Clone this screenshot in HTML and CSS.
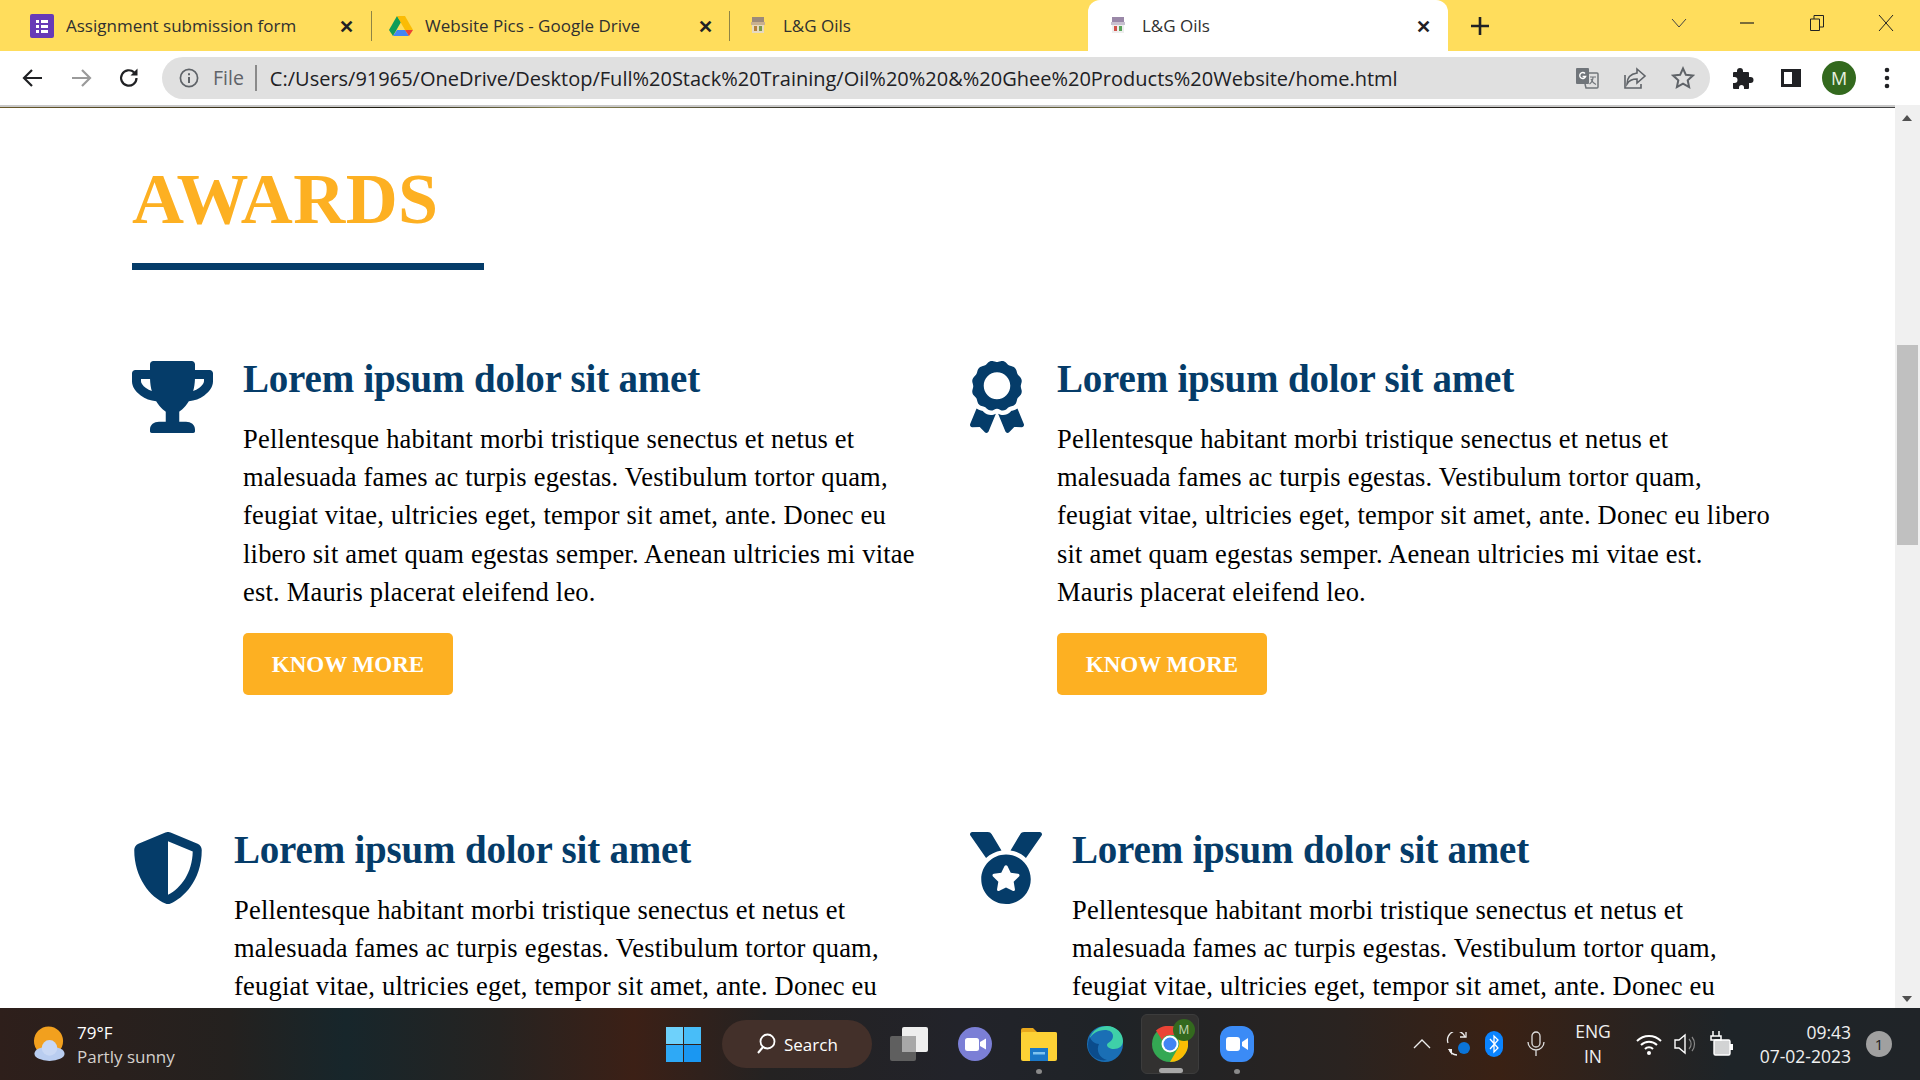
FILE: index.html
```html
<!DOCTYPE html>
<html lang="en">
<head>
    <meta charset="UTF-8">
    <title>L&amp;G Oils</title>
    <link rel="stylesheet" href="styles.css">
</head>
<body>

<div class="tabstrip">
    <div class="tab tab-first">
        <svg class="favicon" viewBox="0 0 24 24"><rect x="0" y="0" width="24" height="24" rx="2" fill="#673ab7"/><path d="M6 6h3v3H6zM11 6h7v3h-7zM6 11h3v3H6zM11 11h7v3h-7zM6 16h3v3H6zM11 16h7v3h-7z" fill="#fff"/></svg>
        <span class="tab-title">Assignment submission form</span>
        <span class="tab-close">&#10005;</span>
    </div>
    <div class="tab">
        <svg class="favicon" viewBox="0 0 24 24"><path d="M8 2L0 16l4 6 8-14z" fill="#0f9d58"/><path d="M8 2h8l8 14h-8z" fill="#fbbc04"/><path d="M4 22l4-6h8l4 6z" fill="#4285f4"/><path d="M16 16h8l-4 6z" fill="#ea4335"/></svg>
        <span class="tab-title">Website Pics - Google Drive</span>
        <span class="tab-close">&#10005;</span>
    </div>
    <div class="tab tab-shop">
        <svg class="favicon-small" viewBox="0 0 16 20"><rect x="2" y="1" width="12" height="5" fill="#9c8a7a"/><rect x="1" y="6" width="14" height="3" fill="#c9b08e"/><rect x="2" y="9" width="12" height="8" fill="#e6d9c0"/><rect x="4" y="10" width="3" height="5" fill="#b5803c"/><rect x="9" y="10" width="3" height="5" fill="#7a9a4a"/></svg>
        <span class="tab-title">L&amp;G Oils</span>
    </div>
    <div class="tab tab-active">
        <svg class="favicon-small" viewBox="0 0 16 20"><rect x="2" y="1" width="12" height="5" fill="#9a88a8"/><rect x="1" y="6" width="14" height="3" fill="#c8c0d0"/><rect x="2" y="9" width="12" height="8" fill="#eee"/><rect x="4" y="10" width="3" height="5" fill="#d0524a"/><rect x="9" y="10" width="3" height="5" fill="#5aa35a"/></svg>
        <span class="tab-title">L&amp;G Oils</span>
        <span class="tab-close">&#10005;</span>
    </div>
    <svg class="new-tab" viewBox="0 0 18 18"><path d="M9 0v18M0 9h18" stroke="#202124" stroke-width="2.6" fill="none"/></svg>
    <div class="win-controls">
        <svg viewBox="0 0 16 10" class="win-chevron"><path d="M1 1l7 8 7-8" stroke="#444" fill="none"/></svg>
        <svg viewBox="0 0 16 16" class="win-min"><path d="M1 8h14" stroke="#222" stroke-width="1.2"/></svg>
        <svg viewBox="0 0 16 18" class="win-restore"><path d="M1.5 5h9v11.5h-9zM5 5V1.5h9.5V13h-4" stroke="#222" fill="none"/></svg>
        <svg viewBox="0 0 16 18" class="win-close"><path d="M1 1l14 16M15 1L1 17" stroke="#222" fill="none"/></svg>
    </div>
</div>

<div class="toolbar">
    <svg class="nav-btn" viewBox="0 0 24 24"><path d="M21 12H4M11 4l-8 8 8 8" stroke="#202124" stroke-width="2.2" fill="none"/></svg>
    <svg class="nav-btn" viewBox="0 0 24 24"><path d="M3 12h17M13 4l8 8-8 8" stroke="#9a9a9a" stroke-width="2.2" fill="none"/></svg>
    <svg class="nav-btn" viewBox="0 0 24 24"><path d="M19.5 12a7.7 7.7 0 1 1-2.4-5.6" stroke="#202124" stroke-width="2.2" fill="none"/><path d="M20.5 2.5v7h-7z" fill="#202124"/></svg>
    <div class="omnibox">
        <svg class="info-icon" viewBox="0 0 20 20"><circle cx="10" cy="10" r="8.6" stroke="#5f6368" stroke-width="1.7" fill="none"/><path d="M10 9v6M10 5.2v2" stroke="#5f6368" stroke-width="2"/></svg>
        <span class="scheme">File</span>
        <span class="url">C:/Users/91965/OneDrive/Desktop/Full%20Stack%20Training/Oil%20%20&amp;%20Ghee%20Products%20Website/home.html</span>
        <svg class="omni-icon omni-translate" viewBox="0 0 24 24"><rect x="1" y="2" width="13" height="16" rx="1" fill="#70757a"/><path d="M14 7h8a1 1 0 0 1 1 1v13a1 1 0 0 1-1 1H11l-1-4" fill="none" stroke="#70757a" stroke-width="1.5"/><path d="M10 7.5a3 3 0 1 0 .6 3H7.6" stroke="#fff" stroke-width="1.4" fill="none"/><path d="M15 11h6M18 11c0 3-2 6-3.500 7M16 13c1 2.500 3 4.500 5 5.500" stroke="#70757a" stroke-width="1.2" fill="none"/></svg>
        <svg class="omni-icon" viewBox="0 0 24 24"><path d="M14 3l8 7-8 7v-4c-5 0-8 1.500-10 5 0-6 3-10 10-11z" fill="none" stroke="#5f6368" stroke-width="1.6"/><path d="M2 9v13h16v-4" fill="none" stroke="#5f6368" stroke-width="1.6"/></svg>
        <svg class="omni-icon" viewBox="0 0 24 24"><path d="M12 2.500l2.900 6.300 6.900.8-5.100 4.700 1.400 6.800-6.100-3.400-6.100 3.400 1.400-6.800-5.100-4.700 6.900-.8z" fill="none" stroke="#5f6368" stroke-width="2"/></svg>
    </div>
    <svg class="tool-icon" viewBox="0 0 24 24"><path d="M9 2a3 3 0 0 1 3 3v1h5a1 1 0 0 1 1 1v4h1.500a3 3 0 0 1 0 6H18v5a1 1 0 0 1-1 1h-4v-1.500a2.500 2.500 0 0 0-5 0V23H3a1 1 0 0 1-1-1v-5h1.500a3 3 0 0 0 0-6H2V7a1 1 0 0 1 1-1h3V5a3 3 0 0 1 3-3z" fill="#202124"/></svg>
    <svg class="tool-icon" viewBox="0 0 24 24"><path d="M2 3h20v18H2z" fill="#202124"/><path d="M5 6h8v12H5z" fill="#fff"/></svg>
    <div class="avatar">M</div>
    <svg class="tool-dots" viewBox="0 0 6 22"><circle cx="3" cy="3" r="2.300" fill="#202124"/><circle cx="3" cy="11" r="2.300" fill="#202124"/><circle cx="3" cy="19" r="2.300" fill="#202124"/></svg>
</div>

<div class="viewport">
    <div class="page">
        <div class="prev-edge"></div>
        <section class="awards">
            <h1 class="awards-title">AWARDS</h1>
            <div class="awards-rule"></div>

            <div class="awards-grid">
                <article class="award">
                    <svg class="award-icon icon-trophy" viewBox="0 0 576 512"><path d="M552 64H448V24c0-13.3-10.700-24-24-24H152c-13.300 0-24 10.700-24 24v40H24C10.700 64 0 74.700 0 88v56c0 35.700 22.500 72.400 61.900 100.700 31.500 22.700 69.800 37.100 110 41.700C203.300 338.500 240 360 240 360v72h-48c-35.300 0-64 20.700-64 56v12c0 6.600 5.400 12 12 12h296c6.600 0 12-5.400 12-12v-12c0-35.300-28.700-56-64-56h-48v-72s36.700-21.500 68.100-73.600c40.300-4.600 78.700-19 110-41.700 39.300-28.300 61.900-65 61.900-100.700V88c0-13.300-10.700-24-24-24zM99.300 192.800C74.900 175.200 64 155.600 64 144v-16h64.200c1 32.600 5.800 61.200 12.800 86.200-15.100-5.200-29.200-12.400-41.700-21.400zM512 144c0 16.100-17.700 36.100-35.300 48.800-12.500 9-26.700 16.200-41.800 21.400 7-25 11.800-53.600 12.800-86.200H512v16z"/></svg>
                    <div class="award-body">
                        <h2>Lorem ipsum dolor sit amet</h2>
                        <p>Pellentesque habitant morbi tristique senectus et netus et<br>malesuada fames ac turpis egestas. Vestibulum tortor quam,<br>feugiat vitae, ultricies eget, tempor sit amet, ante. Donec eu<br>libero sit amet quam egestas semper. Aenean ultricies mi vitae<br>est. Mauris placerat eleifend leo.</p>
                        <a class="know-more">KNOW MORE</a>
                    </div>
                </article>
                <article class="award">
                    <svg class="award-icon icon-ribbon" viewBox="0 0 384 512"><path d="M97.120 362.630c-8.690-8.690-4.160-6.240-25.120-11.850-9.510-2.550-17.870-7.450-25.430-13.320L1.200 448.700c-4.390 10.770 3.810 22.470 15.430 22.030l52.690-2.010L105.560 507c8 8.440 22.040 5.810 26.430-4.960l52.050-127.620c-10.840 6.040-22.870 9.580-35.310 9.580-19.500 0-37.820-7.590-51.610-21.370zM382.800 448.700l-45.370-111.240c-7.560 5.880-15.920 10.770-25.430 13.320-21.070 5.640-16.450 3.180-25.120 11.850-13.790 13.780-32.120 21.370-51.620 21.370-12.440 0-24.470-3.550-35.310-9.580L252 502.040c4.390 10.770 18.440 13.400 26.430 4.960l36.250-38.280 52.690 2.010c11.620.44 19.820-11.270 15.430-22.030zM263 340c15.280-15.550 17.030-14.210 38.790-20.140 13.890-3.790 24.750-14.840 28.470-28.980 7.480-28.400 5.540-24.970 25.950-45.750 10.170-10.350 14.140-25.440 10.420-39.580-7.470-28.380-7.480-24.420 0-52.830 3.720-14.140-.25-29.230-10.420-39.580-20.410-20.780-18.470-17.360-25.950-45.750-3.720-14.140-14.580-25.190-28.470-28.980-27.880-7.610-24.520-5.620-44.950-26.410-10.170-10.350-25-14.400-38.890-10.610-27.870 7.600-23.980 7.610-51.900 0-13.890-3.790-28.720.25-38.890 10.610-20.410 20.780-17.050 18.800-44.940 26.410-13.890 3.790-24.750 14.840-28.470 28.980-7.470 28.390-5.540 24.970-25.950 45.750-10.170 10.350-14.150 25.440-10.420 39.580 7.470 28.360 7.480 24.400 0 52.820-3.720 14.140.25 29.230 10.420 39.590 20.410 20.780 18.470 17.350 25.950 45.750 3.720 14.140 14.580 25.190 28.470 28.980C104.600 325.960 106.270 325 121 340c13.230 13.470 33.840 15.880 49.740 5.820a39.676 39.676 0 0 1 42.530 0c15.890 10.060 36.500 7.650 49.730-5.820zM97.660 175.960c0-53.030 42.240-96.020 94.340-96.020s94.340 42.990 94.340 96.020-42.240 96.020-94.340 96.020-94.340-42.990-94.340-96.020z"/></svg>
                    <div class="award-body">
                        <h2>Lorem ipsum dolor sit amet</h2>
                        <p>Pellentesque habitant morbi tristique senectus et netus et<br>malesuada fames ac turpis egestas. Vestibulum tortor quam,<br>feugiat vitae, ultricies eget, tempor sit amet, ante. Donec eu libero<br>sit amet quam egestas semper. Aenean ultricies mi vitae est.<br>Mauris placerat eleifend leo.</p>
                        <a class="know-more">KNOW MORE</a>
                    </div>
                </article>
                <article class="award">
                    <svg class="award-icon icon-shield" viewBox="0 0 512 512"><path d="M466.500 83.700l-192-80a48.150 48.150 0 0 0-36.900 0l-192 80C27.700 91.100 16 108.600 16 128c0 198.500 114.500 335.700 221.500 380.300 11.800 4.900 25.100 4.900 36.900 0C360.100 472.600 496 349.300 496 128c0-19.400-11.700-36.900-29.500-44.300zM256.100 446.300l-.1-381 175.900 73.300c-3.300 151.400-82.100 261.100-175.800 307.700z"/></svg>
                    <div class="award-body">
                        <h2>Lorem ipsum dolor sit amet</h2>
                        <p>Pellentesque habitant morbi tristique senectus et netus et<br>malesuada fames ac turpis egestas. Vestibulum tortor quam,<br>feugiat vitae, ultricies eget, tempor sit amet, ante. Donec eu</p>
                    </div>
                </article>
                <article class="award">
                    <svg class="award-icon icon-medal" viewBox="0 0 512 512"><path d="M223.750 130.750L154.620 15.540A31.997 31.997 0 0 0 127.180 0H16.030C3.080 0-4.500 14.570 2.920 25.180l111.270 158.960c29.720-27.770 67.520-46.830 109.560-53.390zM495.970 0H384.820c-11.240 0-21.660 5.900-27.440 15.540l-69.130 115.210c42.040 6.560 79.840 25.620 109.560 53.380L509.080 25.180C516.500 14.570 508.920 0 495.970 0zM256 160c-97.200 0-176 78.800-176 176s78.800 176 176 176 176-78.800 176-176-78.800-176-176-176zm92.520 157.260l-37.930 36.960 8.970 52.220c1.600 9.360-8.260 16.510-16.650 12.090L256 393.880l-46.900 24.650c-8.400 4.450-18.250-2.740-16.650-12.090l8.970-52.220-37.930-36.960c-6.820-6.640-3.050-18.230 6.350-19.590l52.430-7.640 23.430-47.520c2.110-4.280 6.190-6.390 10.280-6.390 4.110 0 8.220 2.140 10.330 6.390l23.430 47.520 52.430 7.640c9.400 1.360 13.170 12.950 6.350 19.590z"/></svg>
                    <div class="award-body">
                        <h2>Lorem ipsum dolor sit amet</h2>
                        <p>Pellentesque habitant morbi tristique senectus et netus et<br>malesuada fames ac turpis egestas. Vestibulum tortor quam,<br>feugiat vitae, ultricies eget, tempor sit amet, ante. Donec eu</p>
                    </div>
                </article>
            </div>
        </section>
    </div>
    <div class="scrollbar">
        <span class="scroll-up"></span>
        <span class="scroll-thumb"></span>
        <span class="scroll-down"></span>
    </div>
</div>

<div class="taskbar">
    <div class="weather">
        <svg class="weather-icon" viewBox="0 0 34 36"><circle cx="16" cy="15" r="15" fill="#f2a01e"/><ellipse cx="17" cy="28" rx="15.500" ry="7.500" fill="#b9cdf0"/><circle cx="17" cy="22" r="8" fill="#c9d8f4"/></svg>
        <div class="weather-text">
            <span class="weather-temp">79°F</span>
            <span class="weather-desc">Partly sunny</span>
        </div>
    </div>
    <div class="task-center">
        <svg class="start-icon" viewBox="0 0 35 35"><rect width="17" height="17" fill="#6ed1fb"/><rect x="18" width="17" height="17" fill="#48bdf8"/><rect y="18" width="17" height="17" fill="#2ea9f6"/><rect x="18" y="18" width="17" height="17" fill="#1a97f2"/></svg>
        <div class="search-pill">
            <svg class="search-icon" viewBox="0 0 20 22"><circle cx="11.500" cy="8.500" r="7" stroke="#fff" stroke-width="1.800" fill="none"/><path d="M7 14l-5 6" stroke="#fff" stroke-width="2"/></svg>
            <span>Search</span>
        </div>
        <svg class="task-icon task-view" viewBox="0 0 38 34"><rect x="0" y="9" width="26" height="25" rx="2" fill="#5f5f5f"/><rect x="12" y="0" width="26" height="25" rx="2" fill="#eeeeee"/><rect x="12" y="9" width="14" height="16" fill="#a8a8a8"/></svg>
        <svg class="task-icon task-teams" viewBox="0 0 34 34"><circle cx="17" cy="17" r="17" fill="#7b7fd6"/><rect x="7" y="11" width="14" height="13" rx="2.500" fill="#fff"/><path d="M22 15l6-3.500v11L22 19z" fill="#fff"/></svg>
        <div class="task-slot">
            <svg class="task-icon" viewBox="0 0 36 34"><path d="M0 3a2 2 0 0 1 2-2h10l4 4h18a2 2 0 0 1 2 2v4H0z" fill="#e9a81c"/><rect y="5" width="36" height="29" rx="2" fill="#fdd135"/><rect x="9" y="21" width="18" height="13" fill="#1b78c8"/><rect x="12" y="25" width="12" height="2.500" fill="#7fc4f0"/></svg>
            <i class="task-dot"></i>
        </div>
        <svg class="task-icon" viewBox="0 0 36 36"><circle cx="18" cy="18" r="18" fill="#1a6fb5"/><path d="M2 14C5 3 14 0 20 0c9 0 16 7 16 15 0 5-4 8-9 8-4 0-7-2-7-4 0-3 6-3 6-9 0-4-4-6-8-6-7 0-14 4-16 10z" fill="#3fd0a8"/><path d="M12 18c-3 6 0 14 8 16-9 2-19-4-19-15 0-3 1-6 2-8 1 4 5 7 9 7z" fill="#0b4c8c"/></svg>
        <div class="task-slot task-active">
            <svg class="task-icon" viewBox="0 0 36 36"><circle cx="18" cy="18" r="18" fill="#34a853"/><path d="M18 0a18 18 0 0 1 15.600 9H18a9 9 0 0 0-8 5L4 4.500A18 18 0 0 1 18 0z" fill="#ea4335"/><path d="M33.600 9A18 18 0 0 1 18 36l7.800-13.500A9 9 0 0 0 26 13z" fill="#fbbc04"/><circle cx="18" cy="18" r="8.500" fill="#fff"/><circle cx="18" cy="18" r="6.500" fill="#4285f4"/></svg>
            <span class="chrome-badge">M</span>
            <i class="task-bar-mark"></i>
        </div>
        <div class="task-slot">
            <svg class="task-icon" viewBox="0 0 34 36"><rect width="34" height="36" rx="12" fill="#3b8bf6"/><rect x="6" y="11" width="14" height="14" rx="3" fill="#fff"/><path d="M22 16l6-4v12l-6-4z" fill="#fff"/></svg>
            <i class="task-dot"></i>
        </div>
    </div>
    <div class="tray">
        <svg class="tray-icon tray-caret" viewBox="0 0 18 10"><path d="M1 9l8-8 8 8" stroke="#eee" stroke-width="1.300" fill="none"/></svg>
        <svg class="tray-icon tray-sync" viewBox="0 0 24 24"><path d="M2 11A9 9 0 0 1 19 5" stroke="#eee" stroke-width="1.300" fill="none"/><path d="M14 5h6V0" stroke="#eee" stroke-width="1.300" fill="none"/><path d="M2 17l4 6V17z" fill="#eee"/><path d="M3 17a9 9 0 0 0 8 6" stroke="#eee" stroke-width="1.300" fill="none"/><circle cx="18" cy="16" r="6" fill="#0a74d8"/></svg>
        <svg class="tray-icon tray-bt" viewBox="0 0 18 26"><rect width="18" height="26" rx="9" fill="#0a84ff"/><path d="M5 8l8 9-4 4V5l4 4-8 9" stroke="#fff" stroke-width="1.300" fill="none"/></svg>
        <svg class="tray-icon tray-mic" viewBox="0 0 18 26"><rect x="5" y="1" width="8" height="15" rx="4" stroke="#ddd" stroke-width="1.300" fill="none"/><path d="M1 11a8 8 0 0 0 16 0M9 19v6" stroke="#ddd" stroke-width="1.300" fill="none"/></svg>
        <div class="tray-lang">ENG<br>IN</div>
        <svg class="tray-icon tray-wifi" viewBox="0 0 26 22"><path d="M1 8a17 17 0 0 1 24 0M5 12a11.500 11.500 0 0 1 16 0M9 16a5.500 5.500 0 0 1 8 0" stroke="#fff" stroke-width="2" fill="none"/><circle cx="13" cy="20" r="2" fill="#fff"/></svg>
        <svg class="tray-icon tray-sound" viewBox="0 0 26 26"><path d="M3 9h4l6-5v18l-6-5H3z" stroke="#fff" stroke-width="1.400" fill="none"/><path d="M17 8a7 7 0 0 1 0 10M20 6a11 11 0 0 1 0 14" stroke="#888" stroke-width="1.200" fill="none"/></svg>
        <svg class="tray-icon tray-battery" viewBox="0 0 26 26"><path d="M4 0v5M10 0v5M2 5h10v4H2z" stroke="#fff" stroke-width="1.500" fill="none"/><rect x="5" y="9" width="16" height="15" rx="1.500" stroke="#fff" stroke-width="1.400" fill="#fff" fill-opacity="0.800"/><rect x="21" y="13" width="3" height="6" fill="#fff"/></svg>
        <div class="tray-clock">09:43<br>07-02-2023</div>
        <div class="tray-notify">1</div>
    </div>
</div>

</body>
</html>
```

FILE: styles.css
```css
* {
    box-sizing: border-box;
}
html, body {
    margin: 0;
    height: 100%;
    overflow: hidden;
}
body {
    display: flex;
    flex-direction: column;
    width: 1920px;
    height: 1080px;
    font-family: 'Open Sans', sans-serif;
    background-color: #ffffff;
}

/* tab strip */
.tabstrip {
    display: flex;
    align-items: center;
    height: 51px;
    flex: none;
    background-color: #ffdd5c;
}
.tab {
    display: flex;
    align-items: center;
    position: relative;
    width: 358px;
    height: 51px;
    padding: 0 16px 0 17px;
    color: #303030;
    font-size: 17px;
}
.tab::after {
    content: "";
    position: absolute;
    right: 0;
    top: 11px;
    height: 30px;
    width: 1px;
    background-color: #8f8445;
}
.tab-first {
    width: 372px;
    padding-left: 30px;
    padding-right: 17px;
}
.tab-shop {
    width: 358px;
    padding-left: 20px;
}
.tab-shop::after {
    display: none;
}
.tab-active {
    width: 360px;
    padding-left: 22px;
    background-color: #ffffff;
    border-radius: 12px 12px 0 0;
}
.tab-active::after {
    display: none;
}
.tab-active .favicon-small {
    margin-right: 16px;
}
.favicon {
    width: 24px;
    height: 24px;
    margin-right: 12px;
    flex: none;
}
.favicon-small {
    width: 16px;
    height: 20px;
    margin-right: 17px;
    flex: none;
}
.tab-title {
    flex: 1;
    padding-bottom: 1px;
    white-space: nowrap;
    overflow: hidden;
}
.tab-close {
    width: 16px;
    font-size: 18px;
    font-weight: 700;
    color: #202124;
    line-height: 1;
}
.new-tab {
    width: 18px;
    height: 18px;
    margin-left: 23px;
    flex: none;
}
.win-controls {
    display: flex;
    align-items: center;
    margin-left: auto;
    height: 50px;
    padding-bottom: 6px;
}
.win-chevron {
    width: 16px;
    height: 10px;
}
.win-min {
    width: 16px;
    height: 16px;
    margin-left: 52px;
}
.win-restore {
    width: 16px;
    height: 18px;
    margin-left: 54px;
}
.win-close {
    width: 16px;
    height: 18px;
    margin-left: 53px;
    margin-right: 26px;
}

/* toolbar */
.toolbar {
    display: flex;
    align-items: center;
    height: 54px;
    flex: none;
    padding-left: 21px;
    background-color: #ffffff;
}
.nav-btn {
    width: 24px;
    height: 24px;
    margin-right: 24px;
    flex: none;
}
.omnibox {
    display: flex;
    align-items: center;
    width: 1548px;
    height: 42px;
    margin-left: -3px;
    padding: 0 15px 0 17px;
    border-radius: 21px;
    background-color: #e0e0e0;
}
.info-icon {
    width: 20px;
    height: 20px;
    flex: none;
}
.scheme {
    margin-left: 14px;
    padding-right: 11px;
    border-right: 2px solid #8a8a8a;
    color: #5f6368;
    font-size: 19.5px;
    line-height: 26px;
}
.url {
    margin-left: 13px;
    flex: 1;
    color: #202124;
    font-size: 20px;
    white-space: nowrap;
}
.omni-icon {
    width: 24px;
    height: 24px;
    margin-left: 24px;
    flex: none;
}
.omni-translate {
    margin-left: 0;
}
.tool-icon {
    width: 24px;
    height: 24px;
    margin-left: 24px;
    flex: none;
}
.toolbar .omnibox + .tool-icon {
    margin-left: 21px;
}
.avatar {
    display: flex;
    align-items: center;
    justify-content: center;
    width: 34px;
    height: 34px;
    margin-left: 19px;
    border-radius: 50%;
    background-color: #33691e;
    color: #e8f0e0;
    font-size: 18px;
    flex: none;
}
.tool-dots {
    width: 6px;
    height: 22px;
    margin-left: 28px;
    flex: none;
}

/* page */
.viewport {
    display: flex;
    flex: 1;
    min-height: 0;
}
.page {
    flex: 1;
    overflow: hidden;
    border-top: 2px solid #c8c8c8;
}
.prev-edge {
    height: 1px;
    background: linear-gradient(90deg, #6b5a2a, #1c1a10 20%, #8b8450 30%, #222 45%, #7b7440 60%, #1b1610 75%, #444 100%);
}
.awards {
    padding: 51px 0 0 132px;
    color: #000000;
    font-family: 'Liberation Serif', serif;
}
.awards-title {
    margin: 0;
    color: #fdb022;
    font-size: 72px;
    line-height: 80px;
    font-weight: 700;
    letter-spacing: 0.4px;
}
.awards-rule {
    width: 352px;
    height: 7px;
    margin-top: 24px;
    background-color: #053c69;
}
.awards-grid {
    display: grid;
    grid-template-columns: 838px 1fr;
    row-gap: 137px;
    margin-top: 91px;
}
.award {
    display: flex;
    align-items: flex-start;
}
.award-icon {
    height: 72px;
    margin-right: 30px;
    flex: none;
    fill: #053c69;
}
.icon-trophy {
    width: 81px;
}
.icon-ribbon {
    width: 54px;
    margin-right: 33px;
}
.icon-shield,
.icon-medal {
    width: 72px;
}
.award-body h2 {
    margin: -1px 0 0;
    color: #053c69;
    font-size: 39px;
    line-height: 38px;
    font-weight: 700;
    letter-spacing: -0.2px;
    white-space: nowrap;
}
.award-body p {
    margin: 22px 0 0;
    font-size: 26.5px;
    line-height: 38.2px;
    letter-spacing: 0.2px;
    white-space: nowrap;
}
.know-more {
    display: block;
    width: 210px;
    height: 62px;
    margin-top: 22px;
    padding-top: 2px;
    border-radius: 5px;
    background-color: #fdb022;
    color: #ffffff;
    font-size: 23px;
    font-weight: 700;
    line-height: 60px;
    text-align: center;
}

/* scrollbar */
.scrollbar {
    position: relative;
    width: 25px;
    flex: none;
    background-color: #f0f0f0;
}
.scroll-up,
.scroll-down {
    position: absolute;
    left: 7px;
    width: 0;
    height: 0;
    border-left: 5.5px solid transparent;
    border-right: 5.5px solid transparent;
}
.scroll-up {
    top: 10px;
    border-bottom: 6px solid #505050;
}
.scroll-down {
    bottom: 6px;
    border-top: 6px solid #505050;
}
.scroll-thumb {
    position: absolute;
    left: 2px;
    top: 240px;
    width: 21px;
    height: 200px;
    background-color: #c0c0c0;
}

/* taskbar */
.taskbar {
    display: flex;
    align-items: center;
    position: relative;
    height: 72px;
    flex: none;
    background: linear-gradient(90deg, #2e1f1b 0%, #24211f 12%, #17262b 18%, #262321 26%, #3c2016 33%, #242222 40%, #22232a 50%, #1f2327 58%, #2a2320 70%, #3a2114 78%, #1e2428 90%, #202428 100%);
    color: #ffffff;
}
.weather {
    display: flex;
    align-items: center;
    width: 666px;
    padding-left: 33px;
    flex: none;
}
.weather-icon {
    width: 33px;
    height: 36px;
}
.weather-text {
    display: flex;
    flex-direction: column;
    margin-left: 11px;
    padding-top: 2px;
    font-size: 17px;
    line-height: 24px;
}
.weather-desc {
    color: #d4d0cc;
}
.task-center {
    display: flex;
    align-items: center;
}
.start-icon {
    width: 35px;
    height: 35px;
    flex: none;
}
.search-pill {
    display: flex;
    align-items: center;
    width: 150px;
    height: 48px;
    margin-left: 21px;
    padding-left: 34px;
    border-radius: 24px;
    background-color: #43302a;
    font-size: 17px;
}
.search-icon {
    width: 20px;
    height: 22px;
    margin-right: 8px;
}
.task-icon {
    width: 36px;
    height: 36px;
    flex: none;
}
.task-view {
    width: 38px;
    margin-left: 18px;
}
.task-teams {
    width: 34px;
    margin-left: 30px;
}
.task-slot {
    position: relative;
    display: flex;
    align-items: center;
    justify-content: center;
    width: 58px;
    height: 60px;
}
.task-center > .task-teams + .task-slot {
    margin-left: 23px;
}
.task-center > .task-slot + .task-icon {
    margin-left: 19px;
}
.task-center > .task-icon + .task-slot {
    margin-left: 18px;
}
.task-center > .task-active + .task-slot {
    margin-left: 9px;
}
.task-active {
    border-radius: 6px;
    background-color: #323130;
    border: 1px solid #3c3c3c;
}
.task-dot {
    position: absolute;
    bottom: 0;
    left: 26px;
    width: 6px;
    height: 5px;
    border-radius: 50%;
    background-color: #8a8a8a;
}
.task-bar-mark {
    position: absolute;
    bottom: 0;
    left: 17px;
    width: 24px;
    height: 5px;
    border-radius: 3px;
    background-color: #a8a8a8;
}
.chrome-badge {
    position: absolute;
    top: 4px;
    right: 3px;
    width: 22px;
    height: 22px;
    border-radius: 50%;
    background-color: #33691e;
    color: #c8d8b8;
    font-size: 12px;
    line-height: 22px;
    text-align: center;
}
.tray {
    display: flex;
    align-items: center;
    position: absolute;
    right: 0;
    top: 0;
    height: 72px;
    width: 510px;
}
.tray-icon {
    flex: none;
}
.tray-caret {
    width: 18px;
    height: 10px;
    margin-left: 3px;
}
.tray-sync {
    width: 24px;
    height: 24px;
    margin-left: 15px;
}
.tray-bt {
    width: 18px;
    height: 26px;
    margin-left: 15px;
}
.tray-mic {
    width: 18px;
    height: 26px;
    margin-left: 24px;
}
.tray-lang {
    width: 50px;
    margin-left: 23px;
    font-size: 17.5px;
    line-height: 25px;
    text-align: center;
    color: #f0f0f0;
}
.tray-wifi {
    width: 26px;
    height: 22px;
    margin-left: 18px;
}
.tray-sound {
    width: 26px;
    height: 26px;
    margin-left: 10px;
}
.tray-battery {
    width: 26px;
    height: 26px;
    margin-left: 11px;
}
.tray-clock {
    width: 116px;
    margin-left: 0;
    font-size: 17.5px;
    line-height: 24px;
    text-align: right;
    color: #f0f0f0;
}
.tray-notify {
    width: 26px;
    height: 26px;
    margin-left: 15px;
    border-radius: 50%;
    background-color: #a0a0a0;
    color: #1c1c1c;
    font-size: 15px;
    line-height: 26px;
    text-align: center;
}
```
